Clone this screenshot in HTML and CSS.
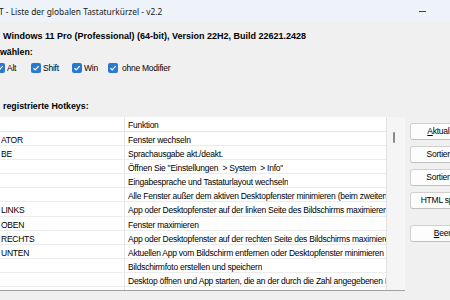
FILE: index.html
```html
<!DOCTYPE html>
<html>
    <head>
        <meta http-equiv="content-type" content="text/html;charset=utf-8">
        <title>Liste der globalen Tastaturkürzel</title>
        <link rel="stylesheet" href="styles.css">
    </head>
    <body>
        <!-- Titelleiste -->
        <div class="titlebar">
            <span class="title">T - Liste der globalen Tastaturkürzel - v2.2</span>
            <span class="min"></span>
            <span class="max"></span>
        </div>
        <div class="main">
            <div class="os">Windows 11 Pro (Professional) (64-bit), Version 22H2, Build 22621.2428</div>
            <div class="label">wählen:</div>
            <!-- Modifier -->
            <div class="checks">
                <label class="cb"><span class="box"><svg viewBox="0 0 10 10"><path d="M2.4 5.2 L4.2 7 L7.7 3.2"/></svg></span>Alt</label>
                <label class="cb"><span class="box"><svg viewBox="0 0 10 10"><path d="M2.4 5.2 L4.2 7 L7.7 3.2"/></svg></span>Shift</label>
                <label class="cb"><span class="box"><svg viewBox="0 0 10 10"><path d="M2.4 5.2 L4.2 7 L7.7 3.2"/></svg></span>Win</label>
                <label class="cb"><span class="box"><svg viewBox="0 0 10 10"><path d="M2.4 5.2 L4.2 7 L7.7 3.2"/></svg></span>ohne Modifier</label>
            </div>
            <div class="label hk">registrierte Hotkeys:</div>
            <div class="lower">
                <!-- Liste -->
                <div class="list">
                    <div class="grid">
                        <div class="row head"><div class="c1"></div><div class="c2">Funktion</div></div>
                        <div class="row"><div class="c1">ATOR</div><div class="c2">Fenster wechseln</div></div>
                        <div class="row"><div class="c1">BE</div><div class="c2">Sprachausgabe akt./deakt.</div></div>
                        <div class="row"><div class="c1"></div><div class="c2">Öffnen Sie "Einstellungen &nbsp;&gt; System &nbsp;&gt; Info"</div></div>
                        <div class="row"><div class="c1"></div><div class="c2">Eingabesprache und Tastaturlayout wechseln</div></div>
                        <div class="row"><div class="c1"></div><div class="c2">Alle Fenster außer dem aktiven Desktopfenster minimieren (beim zweiten 'Drücken wiederherstellen)</div></div>
                        <div class="row"><div class="c1">LINKS</div><div class="c2">App oder Desktopfenster auf der linken Seite des Bildschirms maximieren</div></div>
                        <div class="row"><div class="c1">OBEN</div><div class="c2">Fenster maximieren</div></div>
                        <div class="row"><div class="c1">RECHTS</div><div class="c2">App oder Desktopfenster auf der rechten Seite des Bildschirms maximieren</div></div>
                        <div class="row"><div class="c1">UNTEN</div><div class="c2">Aktuellen App vom Bildschirm entfernen oder Desktopfenster minimieren</div></div>
                        <div class="row"><div class="c1"></div><div class="c2">Bildschirmfoto erstellen und speichern</div></div>
                        <div class="row"><div class="c1"></div><div class="c2">Desktop öffnen und App starten, die an der durch die Zahl angegebenen Position angeheftet ist</div></div>
                    </div>
                    <div class="scroll"><div class="thumb"></div></div>
                </div>
                <!-- Knöpfe -->
                <div class="buttons">
                    <div class="btn"><u>A</u>ktualisieren</div>
                    <div class="btn">Sortieren A-Z</div>
                    <div class="btn">Sortieren Z-A</div>
                    <div class="btn">HTML speichern</div>
                    <div class="btn last"><u>B</u>eenden</div>
                </div>
            </div>
        </div>
    </body>
</html>
```

FILE: styles.css
```css
body {
    margin: 0;
    width: 450px;
    height: 300px;
    overflow: hidden;
    background: #f0f0f0;
    font-family: "Liberation Sans", sans-serif;
    font-size: 8.5px;
    letter-spacing: -0.25px;
    color: #000;
}
/* Titelleiste */
.titlebar {
    height: 22px;
    background: #eef3f9;
    display: flex;
    align-items: center;
    white-space: nowrap;
}
.title {
    font-family: "Noto Sans", sans-serif;
    font-size: 8.4px;
    letter-spacing: 0;
    margin-left: -1px;
    color: #1a1a1a;
}
.min {
    flex-shrink: 0;
    margin-left: auto;
    width: 7px;
    height: 1px;
    background: #444;
}
.max {
    flex-shrink: 0;
    margin-left: 24px;
    margin-right: -10px;
    width: 8px;
    height: 8px;
    border: 1px solid #222;
    border-radius: 1px;
}
/* Kopf */
.main {
    white-space: nowrap;
}
.os {
    margin-top: 7px;
    height: 14px;
    line-height: 14px;
    padding-left: 3px;
    font-weight: bold;
    font-size: 9px;
    letter-spacing: 0;
}
.label {
    margin-top: 2px;
    height: 14px;
    line-height: 14px;
    font-weight: bold;
    font-size: 8.8px;
    letter-spacing: 0;
}
.hk {
    margin-top: 24px;
    padding-left: 3px;
}
.checks {
    margin-top: 2px;
    height: 14px;
    display: flex;
    align-items: center;
    margin-left: -5px;
}
.cb {
    display: flex;
    align-items: center;
    gap: 2px;
}
.cb:nth-child(1) { width: 36px; }
.cb:nth-child(2) { width: 41px; }
.cb:nth-child(3) { width: 36px; }
.cb:nth-child(4) { gap: 4px; }
.box {
    width: 10px;
    height: 10px;
    border-radius: 2px;
    background: #2a78d0;
    display: flex;
}
.box svg {
    width: 10px;
    height: 10px;
}
.box path {
    fill: none;
    stroke: #fff;
    stroke-width: 1.2;
}
/* Liste */
.lower {
    margin-top: 4px;
    display: flex;
}
.list {
    display: flex;
    width: 405px;
    height: 174px;
    border-bottom: 1px solid #a0a0a0;
    box-sizing: border-box;
    flex-shrink: 0;
}
.grid {
    width: 387px;
    background: #fff;
    overflow: hidden;
    border-right: 1px solid #e3e3e3;
    box-sizing: border-box;
    background-image: linear-gradient(#e6e6e6, #e6e6e6);
    background-size: 1px 100%;
    background-position: 124px 0;
    background-repeat: no-repeat;
}
.row {
    display: flex;
    height: 14.1px;
    line-height: 14px;
    padding-top: 1px;
    border-bottom: 1px solid #ececec;
    box-sizing: border-box;
}
.row.head {
    height: 15px;
    line-height: 14px;
    border-bottom: 1px solid #e3e3e3;
}
.c1 {
    width: 124px;
    padding-left: 1px;
    box-sizing: border-box;
    flex-shrink: 0;
}
.c2 {
    padding-left: 4px;
    overflow: hidden;
}
.scroll {
    flex: 1;
    background: #f5f5f5;
}
.thumb {
    width: 2px;
    height: 11px;
    margin: 15px 0 0 6px;
    border-radius: 1px;
    background: #8a8a8a;
}
/* Knöpfe */
.buttons {
    margin-left: 5px;
    padding-top: 6px;
    display: flex;
    flex-direction: column;
    gap: 6px;
}
.btn {
    width: 80px;
    height: 17px;
    line-height: 15px;
    text-align: center;
    background: #fdfdfd;
    border: 1px solid #d0d0d0;
    border-bottom-color: #c0c0c0;
    border-radius: 3px;
    box-sizing: border-box;
}
.btn.last {
    margin-top: 10px;
}
```
